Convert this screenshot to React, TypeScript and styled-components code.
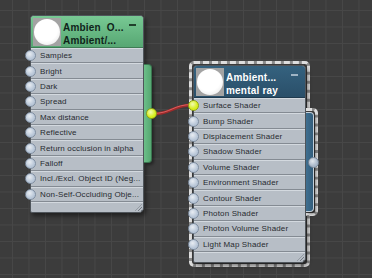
import React from "react";
import styled, { createGlobalStyle, css } from "styled-components";

type Tone = "green" | "blue";

const GlobalStyle = createGlobalStyle`
  html, body {
    margin: 0;
    padding: 0;
    background: #3c3c3c;
  }
  body {
    font-family: "Liberation Sans", Arial, sans-serif;
  }
`;

const Canvas = styled.div`
  position: relative;
  width: 372px;
  height: 278px;
  overflow: hidden;
  background-color: #3c3c3c;
  background-image: linear-gradient(#474747 1px, transparent 1px),
    linear-gradient(90deg, #474747 1px, transparent 1px);
  background-size: 16.5px 16.5px;
  background-position: 12px 10px;
`;

const Wires = styled.svg`
  position: absolute;
  left: 0;
  top: 0;
  width: 372px;
  height: 278px;
  pointer-events: none;
`;

const NodeWrap = styled.div<{ $x: number; $y: number }>`
  position: absolute;
  left: ${(p) => p.$x}px;
  top: ${(p) => p.$y}px;
  display: flex;
  align-items: flex-start;
`;

const selectedFrame = css`
  border: 3px dashed #dedede;
  background: linear-gradient(#3c3c3c, #3c3c3c) padding-box, #8a8a8a border-box;
`;

const Frame = styled.div<{ $selected: boolean }>`
  ${(p) =>
    p.$selected &&
    css`
      ${selectedFrame};
      padding: 1px;
      border-radius: 5px;
    `}
`;

const Card = styled.div<{ $w: number }>`
  width: ${(p) => p.$w}px;
  box-sizing: border-box;
  background: #b7bec6;
  border: 1px solid #4f555b;
  border-radius: 4px 4px 5px 2px;
  box-shadow: 2px 3px 4px rgba(0, 0, 0, 0.45);
  font-size: 8px;
  color: #272b30;
`;

const Header = styled.div<{ $tone: Tone }>`
  height: 32px;
  box-sizing: border-box;
  display: flex;
  align-items: flex-start;
  gap: 2px;
  padding: 2px 3px 2px 2px;
  border-radius: 3px 3px 0 0;
  background: ${(p) =>
    p.$tone === "green"
      ? "linear-gradient(#78c994, #57a773)"
      : "linear-gradient(#35627f, #2a4f69)"};
  border-bottom: 1px solid ${(p) => (p.$tone === "green" ? "#3f7c55" : "#1f3a4e")};
  color: ${(p) => (p.$tone === "green" ? "#10241a" : "#ffffff")};
`;

const Thumb = styled.div`
  flex: none;
  width: 28px;
  height: 28px;
  display: grid;
  place-items: center;
  background: #a3a3a3;
`;

const Ball = styled.div`
  width: 26px;
  height: 26px;
  border-radius: 50%;
  background: radial-gradient(circle at 45% 40%, #ffffff 55%, #efefef 78%, #c9c9c9 100%);
`;

const Titles = styled.div`
  flex: 1;
  min-width: 0;
  padding-top: 3px;
  font-size: 10px;
  font-weight: bold;
  line-height: 13px;
  letter-spacing: 0.2px;
  white-space: pre;
  overflow: hidden;
`;

const Collapse = styled.span<{ $tone: Tone }>`
  flex: none;
  width: 7px;
  height: 2px;
  margin: 6px 4px 0 0;
  background: ${(p) => (p.$tone === "green" ? "#21402c" : "#9fb4c4")};
`;

const Row = styled.div`
  position: relative;
  height: 15.4px;
  box-sizing: border-box;
  display: flex;
  align-items: center;
  padding-left: 9px;
  border-top: 1px solid #d3d9df;
  border-bottom: 1px solid #848b93;
  letter-spacing: 0.15px;
  white-space: nowrap;
`;

const Socket = styled.span<{ $color: string; $rim: string }>`
  position: absolute;
  top: 50%;
  left: -6.5px;
  width: 11px;
  height: 11px;
  margin-top: -5.5px;
  box-sizing: border-box;
  border-radius: 50%;
  border: 1px solid ${(p) => p.$rim};
  background: radial-gradient(circle at 40% 35%, #ffffff -30%, ${(p) => p.$color} 60%);
`;

const OutSocket = styled(Socket)`
  left: auto;
  right: -6px;
`;

const Footer = styled.div`
  position: relative;
  height: 9px;
  border-top: 1px solid #d3d9df;
  border-radius: 0 0 5px 2px;

  &::after {
    content: "";
    position: absolute;
    right: 1px;
    bottom: 1px;
    width: 7px;
    height: 7px;
    background: repeating-linear-gradient(
      135deg,
      transparent 0 1.5px,
      #737a82 1.5px 2.5px
    );
    clip-path: polygon(100% 0, 100% 100%, 0 100%);
  }
`;

const Tab = styled.div<{ $top: number; $selected: boolean }>`
  position: relative;
  z-index: 2;
  margin-top: ${(p) => p.$top}px;
  ${(p) =>
    p.$selected &&
    css`
      ${selectedFrame};
      margin-left: -4px;
      border-left: none;
      padding: 1px 1px 1px 0;
      border-radius: 0 5px 5px 0;
    `}
`;

const TabFill = styled.div<{ $tone: Tone; $h: number }>`
  position: relative;
  width: 8px;
  height: ${(p) => p.$h}px;
  box-sizing: border-box;
  border-radius: 0 4px 4px 0;
  border: 1px solid ${(p) => (p.$tone === "green" ? "#3a7650" : "#c3cfd9")};
  border-left: none;
  background: ${(p) =>
    p.$tone === "green"
      ? "linear-gradient(90deg, #6cbf89, #56a872)"
      : "linear-gradient(90deg, #3f6f90, #335d7b)"};
  box-shadow: 2px 2px 3px rgba(0, 0, 0, 0.4);
`;

type NodeProps = {
  x: number;
  y: number;
  width: number;
  tone: Tone;
  titles: string[];
  inputs: string[];
  linked?: number;
  selected?: boolean;
  tabTop: number;
  tabHeight: number;
  outColor: string;
  outRim: string;
};

const inColor = "#b9c7d8";
const inRim = "#7f8ea1";
const live = "#d7ef1c";
const liveRim = "#8fa314";

const ShaderNode = ({
  x,
  y,
  width,
  tone,
  titles,
  inputs,
  linked,
  selected = false,
  tabTop,
  tabHeight,
  outColor,
  outRim,
}: NodeProps) => (
  <NodeWrap $x={x} $y={y}>
    <Frame $selected={selected}>
      <Card $w={width}>
        <Header $tone={tone}>
          <Thumb>
            <Ball />
          </Thumb>
          <Titles>
            {titles.map((t) => (
              <div key={t}>{t}</div>
            ))}
          </Titles>
          <Collapse $tone={tone} />
        </Header>
        {inputs.map((name, i) => (
          <Row key={name}>
            <Socket
              $color={i === linked ? live : inColor}
              $rim={i === linked ? liveRim : inRim}
            />
            {name}
          </Row>
        ))}
        <Footer />
      </Card>
    </Frame>
    <Tab $top={tabTop} $selected={selected}>
      <TabFill $tone={tone} $h={tabHeight}>
        <OutSocket $color={outColor} $rim={outRim} />
      </TabFill>
    </Tab>
  </NodeWrap>
);

const occlusionInputs = [
  "Samples",
  "Bright",
  "Dark",
  "Spread",
  "Max distance",
  "Reflective",
  "Return occlusion in alpha",
  "Falloff",
  "Incl./Excl. Object ID (Neg...",
  "Non-Self-Occluding Obje...",
];

const materialInputs = [
  "Surface Shader",
  "Bump Shader",
  "Displacement Shader",
  "Shadow Shader",
  "Volume Shader",
  "Environment Shader",
  "Contour Shader",
  "Photon Shader",
  "Photon Volume Shader",
  "Light Map Shader",
];

export default function App() {
  return (
    <>
      <GlobalStyle />
      <Canvas>
        <Wires viewBox="0 0 372 278">
          <path
            d="M152 114 C 172 114, 172 105, 193 105"
            fill="none"
            stroke="#9e2a2a"
            strokeWidth="3"
          />
          <path
            d="M152 113.5 C 172 113.5, 172 104.5, 193 104.5"
            fill="none"
            stroke="#d86060"
            strokeWidth="1"
          />
        </Wires>
        <ShaderNode
          x={30}
          y={15}
          width={114}
          tone="green"
          titles={["Ambien  O...", "Ambient/..."]}
          inputs={occlusionInputs}
          tabTop={49}
          tabHeight={99}
          outColor={live}
          outRim={liveRim}
        />
        <ShaderNode
          x={189}
          y={61}
          width={113}
          tone="blue"
          titles={["Ambient...", "mental ray"]}
          inputs={materialInputs}
          linked={0}
          selected
          tabTop={47}
          tabHeight={100}
          outColor="#a9b8ca"
          outRim="#7a8899"
        />
      </Canvas>
    </>
  );
}
